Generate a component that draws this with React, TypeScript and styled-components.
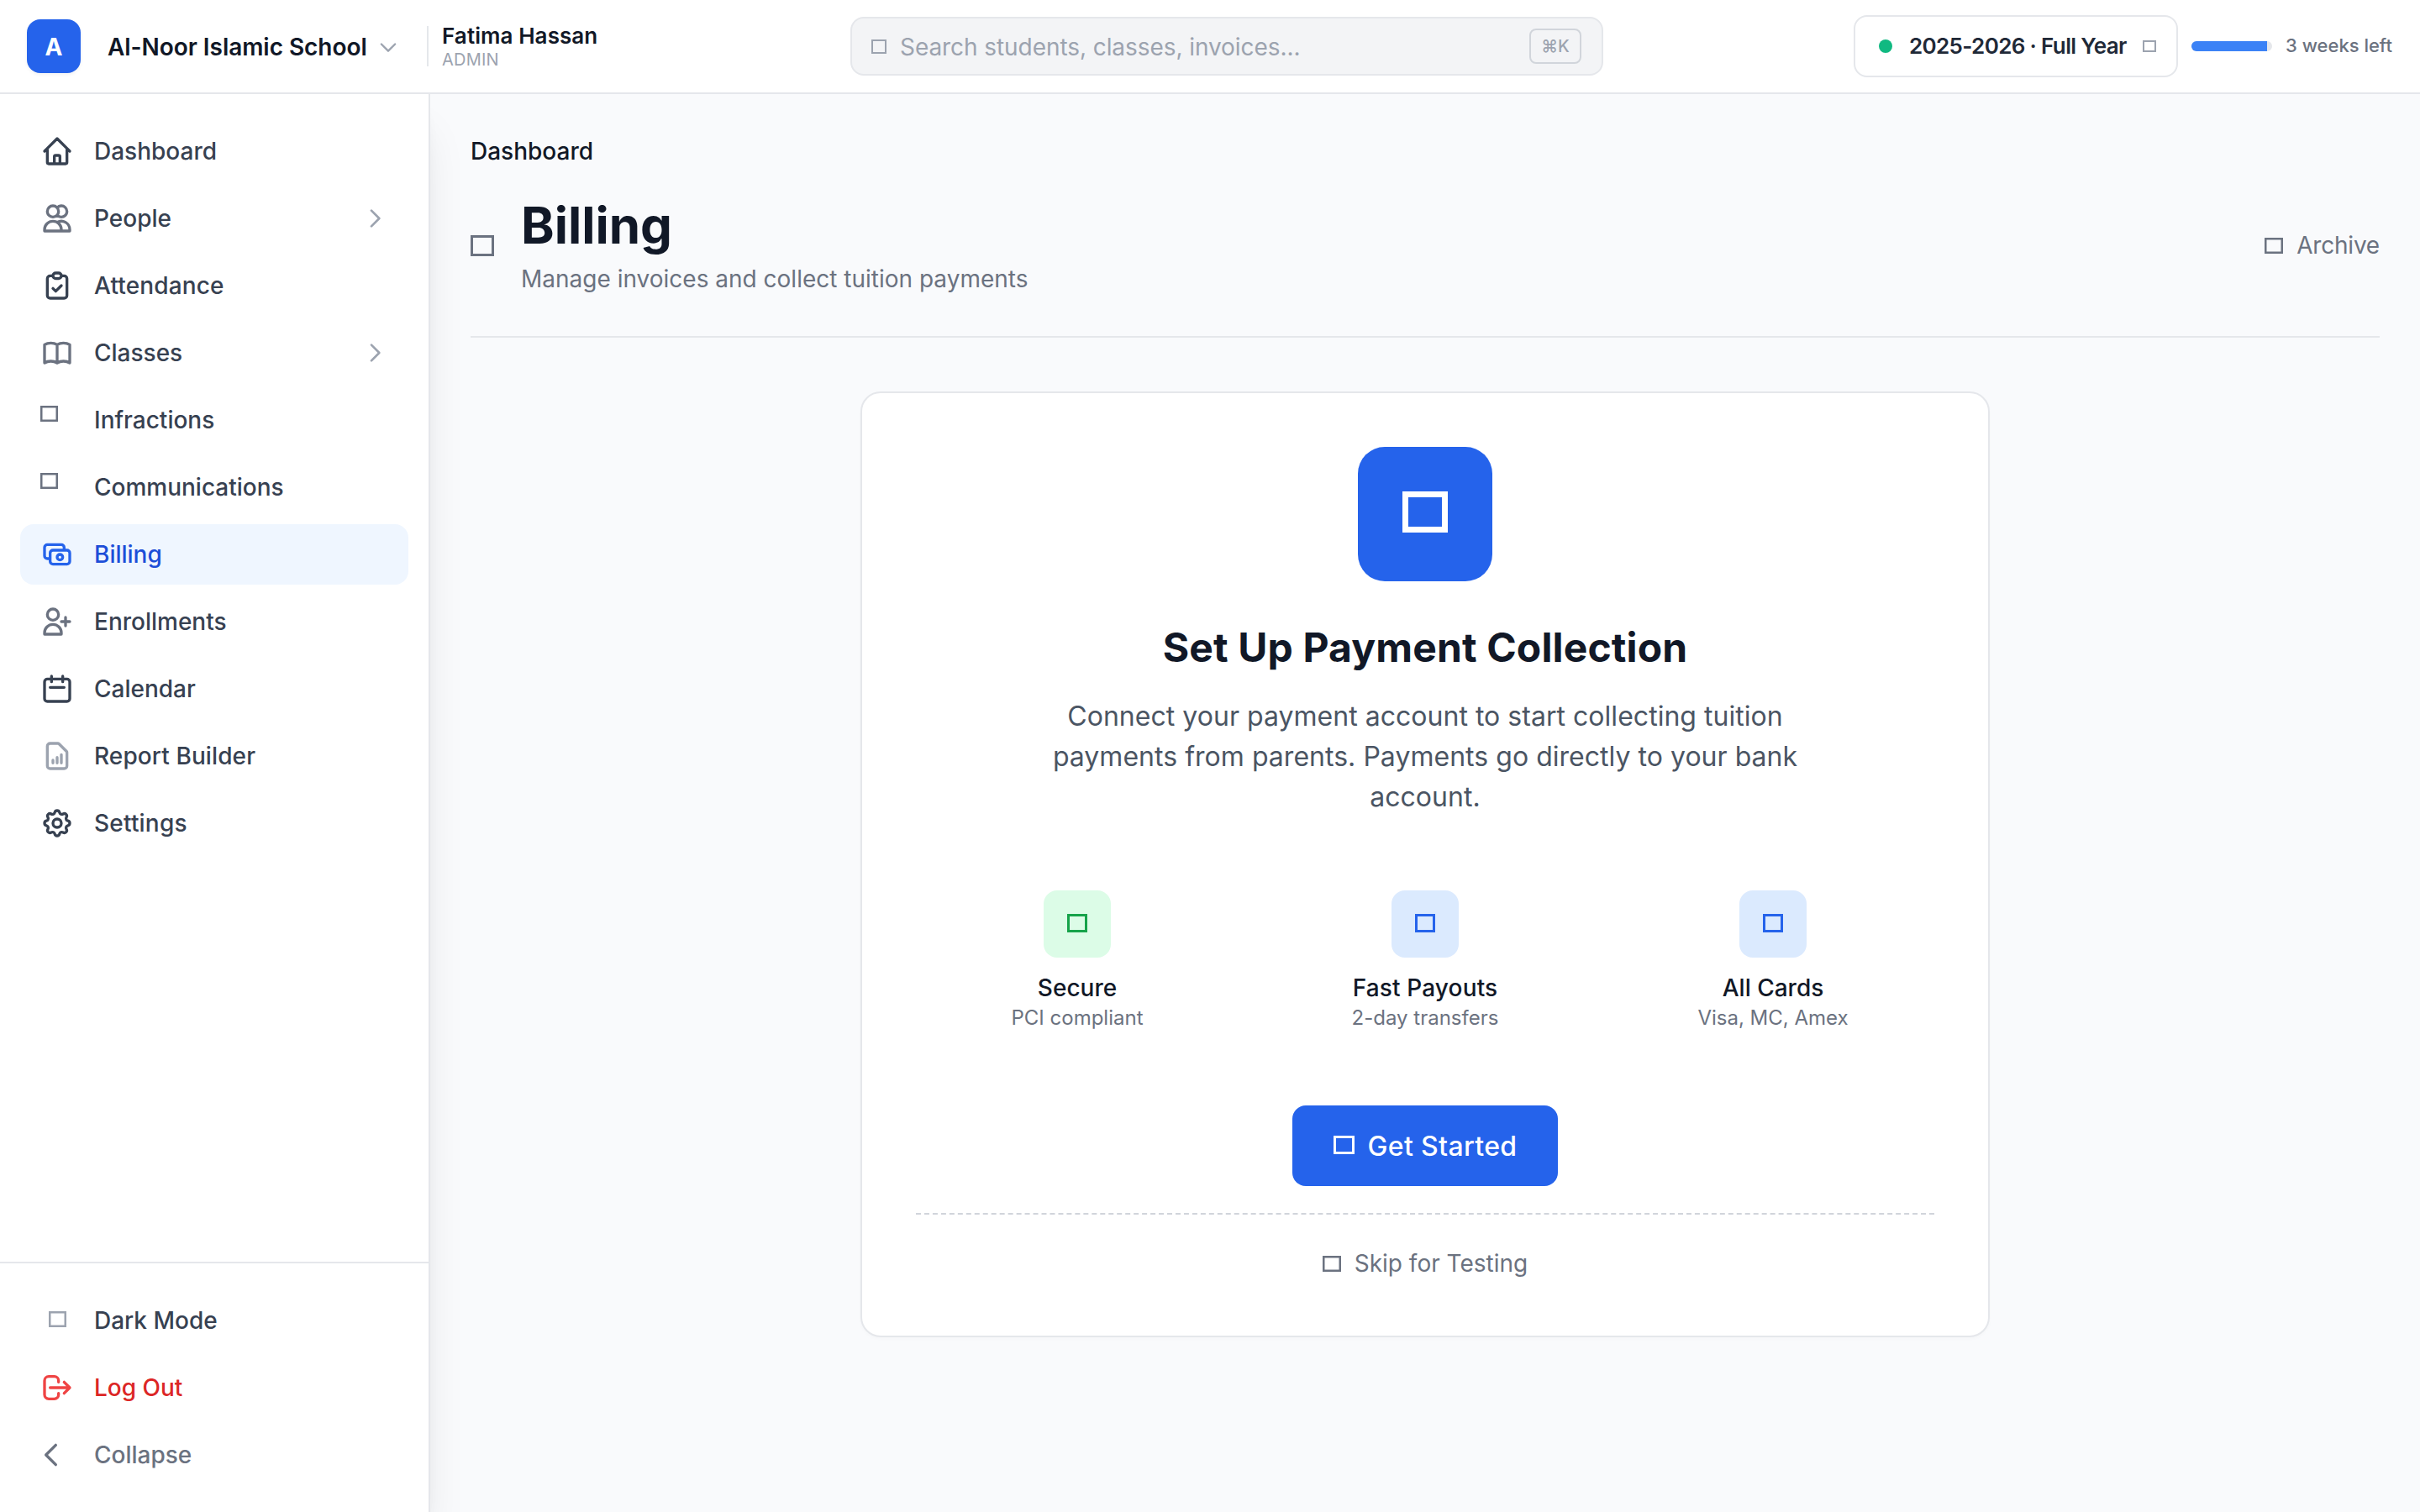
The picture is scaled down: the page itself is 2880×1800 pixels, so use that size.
import React from "react";
import styled, { createGlobalStyle } from "styled-components";

const GlobalStyle = createGlobalStyle`
  *, *::before, *::after { box-sizing: border-box; }
  body {
    margin: 0;
    background: #f9fafc;
    color: #111827;
    font-family: Inter, "Liberation Sans", sans-serif;
    font-size: 28px;
    line-height: 40px;
    font-variation-settings: "opsz" 14;
    -webkit-font-smoothing: antialiased;
  }
  h1, h2, p { margin: 0; }
  button { font: inherit; font-variation-settings: inherit; border: 0; background: none; padding: 0; }
`;

const Page = styled.div`
  display: flex;
  flex-direction: column;
  width: 2880px;
  height: 1800px;
  overflow: hidden;
`;

/* Text run with its own tracking and optional baseline nudge */
const Run = styled.span<{ $track?: number; $drop?: number }>`
  letter-spacing: ${(p) => p.$track ?? 0}px;
  padding-top: ${(p) => p.$drop ?? 0}px;
  white-space: nowrap;
`;

/* ---------- Header ---------- */

const Header = styled.header`
  flex: none;
  display: grid;
  grid-template-columns: 980px 896px 1fr;
  align-items: center;
  height: 112px;
  padding: 0 32px;
  background: #fff;
  border-bottom: 2px solid #e5e7eb;
  position: relative;
  z-index: 2;
`;

const Brand = styled.div`
  display: flex;
  align-items: center;
`;

const Logo = styled.div`
  display: flex;
  align-items: center;
  justify-content: center;
  width: 64px;
  height: 64px;
  margin-right: 32px;
  padding-top: 1px;
  border-radius: 16px;
  background: #2563eb;
  color: #fff;
  font-weight: 700;
  box-shadow: 0 2px 4px rgba(0, 0, 0, 0.05);
`;

const SchoolName = styled.span`
  width: 308px;
  margin-right: 12px;
  padding-top: 2px;
  font-weight: 600;
  letter-spacing: -0.05px;
  white-space: nowrap;
`;

const ChevronSlot = styled.span`
  display: flex;
  padding-top: 2px;
`;

const User = styled.div`
  display: flex;
  flex-direction: column;
  margin-left: 16px;
`;

const UserName = styled.span`
  font-size: 26px;
  line-height: 32px;
  font-weight: 600;
  letter-spacing: 0.08px;
`;

const UserRole = styled.span`
  font-size: 20px;
  line-height: 24px;
  letter-spacing: 0.2px;
  color: #9ca3af;
`;

const Divider = styled.span`
  width: 2px;
  height: 48px;
  margin-left: 32px;
  background: #e5e7eb;
`;

const Search = styled.div`
  display: flex;
  align-items: center;
  height: 70px;
  padding: 0 24px 0 23px;
  border: 2px solid #e5e7eb;
  border-radius: 16px;
  background: #f3f4f6;
  color: #9ca3af;
`;

const SearchText = styled.span`
  flex: 1;
  margin-left: 16px;
  padding-top: 2px;
  letter-spacing: -0.07px;
`;

const Kbd = styled.span`
  display: flex;
  align-items: center;
  justify-content: center;
  width: 62px;
  height: 42px;
  border: 2px solid #d1d5db;
  border-radius: 8px;
  font-size: 20px;
  font-weight: 500;
`;

const HeaderRight = styled.div`
  display: flex;
  align-items: center;
  justify-content: flex-end;
`;

const Term = styled.div`
  display: flex;
  align-items: center;
  width: 386px;
  height: 74px;
  padding: 0 24px 0 28px;
  border: 2px solid #e5e7eb;
  border-radius: 16px;
  color: #9ca3af;
`;

const Dot = styled.span`
  width: 16px;
  height: 16px;
  margin-right: 20px;
  border-radius: 50%;
  background: #10b981;
`;

const TermName = styled.span`
  flex: 1;
  font-size: 26px;
  font-weight: 600;
  letter-spacing: -0.025em;
  color: #1f2937;
  white-space: nowrap;
`;

const Track = styled.div`
  width: 96px;
  height: 12px;
  margin: 0 16px;
  border-radius: 6px;
  overflow: hidden;
  background: #e5e7eb;
`;

const Fill = styled.div`
  height: 100%;
  background: #3b82f6;
`;

const WeeksLeft = styled.span`
  width: 128px;
  font-size: 22px;
  line-height: 38px;
  padding-bottom: 2px;
  font-weight: 500;
  color: #6b7280;
  white-space: nowrap;
`;

/* ---------- Sidebar ---------- */

const Body = styled.div`
  flex: 1;
  display: flex;
  min-height: 0;
`;

const Sidebar = styled.aside`
  flex: none;
  display: flex;
  flex-direction: column;
  justify-content: space-between;
  width: 512px;
  background: #fff;
  border-right: 2px solid #e5e7eb;
  box-shadow: 0 40px 50px -10px rgba(0, 0, 0, 0.1), 0 16px 20px -12px rgba(0, 0, 0, 0.1);
`;

const NavGroup = styled.nav<{ $footer?: boolean }>`
  display: flex;
  flex-direction: column;
  gap: 8px;
  padding: 32px 24px;
  border-top: ${(p) => (p.$footer ? "2px solid #e5e7eb" : "0")};
`;

const NavItem = styled.button<{ $active?: boolean; $color?: string }>`
  display: flex;
  align-items: center;
  height: 72px;
  padding: 0 24px;
  border-radius: 16px;
  background: ${(p) => (p.$active ? "#eff6ff" : "transparent")};
  color: ${(p) => p.$color ?? "#374151"};
  font-weight: 500;
  text-align: left;
`;

const NavLabel = styled.span<{ $track?: number }>`
  flex: 1;
  letter-spacing: ${(p) => p.$track ?? 0}px;
`;

const IconSlot = styled.span<{ $color: string; $align?: string }>`
  display: flex;
  align-items: ${(p) => p.$align ?? "center"};
  justify-content: ${(p) => p.$align ?? "center"};
  width: 40px;
  height: 40px;
  padding: ${(p) => (p.$align ? "3px 0 0" : "0")};
  margin-right: 24px;
  color: ${(p) => p.$color};
`;

const GlyphNudge = styled.span<{ $up: number }>`
  display: flex;
  padding-bottom: ${(p) => p.$up}px;
`;

/* ---------- Main ---------- */

const Main = styled.main`
  flex: 1;
  display: flex;
  flex-direction: column;
  padding: 48px;
`;

const Breadcrumb = styled.div`
  font-weight: 500;
`;

const PageHead = styled.div`
  display: flex;
  align-items: center;
  margin-top: 32px;
  padding-bottom: 48px;
  border-bottom: 2px solid #e5e7eb;
  color: #6b7280;
`;

const HeadText = styled.div`
  flex: 1;
  margin-left: 32px;
`;

const Title = styled.h1`
  margin-bottom: 8px;
  font-size: 60px;
  line-height: 72px;
  font-weight: 700;
  color: #111827;
`;

const Archive = styled.button`
  display: flex;
  align-items: center;
  gap: 16px;
  color: #6b7280;
`;

const Card = styled.section`
  display: flex;
  flex-direction: column;
  align-items: center;
  align-self: center;
  width: 1344px;
  height: 1126px;
  margin-top: 64px;
  padding: 64px;
  border: 2px solid #e5e7eb;
  border-radius: 24px;
  background: #fff;
  box-shadow: 0 2px 4px rgba(0, 0, 0, 0.02);
`;

const Tile = styled.div`
  flex: none;
  display: flex;
  align-items: center;
  justify-content: center;
  width: 160px;
  height: 160px;
  padding-bottom: 5px;
  border-radius: 32px;
  background: #2563eb;
  color: #fff;
`;

const CardTitle = styled.h2`
  margin: 49px 0 28px;
  font-size: 48px;
  line-height: 60px;
  font-weight: 700;
  letter-spacing: 0.14px;
`;

const Lead = styled.p`
  width: 896px;
  font-size: 32px;
  line-height: 48px;
  text-align: center;
  letter-spacing: 0.03px;
  color: #4b5563;
`;

const Features = styled.div`
  align-self: stretch;
  display: grid;
  grid-template-columns: repeat(3, 1fr);
  gap: 30px;
  margin: 87px 0 88px;
`;

const Feature = styled.div`
  display: flex;
  flex-direction: column;
  align-items: center;
`;

const FeatureIcon = styled.div<{ $bg: string; $fg: string }>`
  display: flex;
  align-items: center;
  justify-content: center;
  width: 80px;
  height: 80px;
  padding-bottom: 2px;
  margin-bottom: 16px;
  border-radius: 16px;
  background: ${(p) => p.$bg};
  color: ${(p) => p.$fg};
`;

const FeatureName = styled.span<{ $track?: number }>`
  font-weight: 500;
  letter-spacing: ${(p) => p.$track ?? 0}px;
`;

const FeatureNote = styled.span`
  font-size: 24px;
  line-height: 32px;
  color: #6b7280;
`;

const Primary = styled.button`
  flex: none;
  display: flex;
  align-items: center;
  justify-content: center;
  gap: 16px;
  width: 316px;
  height: 96px;
  border-radius: 16px;
  background: #2563eb;
  color: #fff;
  font-size: 32px;
  font-weight: 500;
`;

const SkipRow = styled.div`
  align-self: stretch;
  display: flex;
  justify-content: center;
  margin-top: 32px;
  padding-top: 36px;
  border-top: 2px dashed #d1d5db;
`;

const Skip = styled.button`
  display: flex;
  align-items: center;
  gap: 16px;
  line-height: 44px;
  color: #6b7280;
`;

/* ---------- Icons ---------- */

/* Hollow square used wherever the icon font has no glyph */
const SquareSvg = styled.svg`
  display: block;
  flex: none;
`;

const Square = ({ w, h, b = 2.5 }: { w: number; h: number; b?: number }) => (
  <SquareSvg width={w} height={h} fill="none" stroke="currentColor" strokeWidth={b}>
    <rect x={b / 2} y={b / 2} width={w - b} height={h - b} />
  </SquareSvg>
);

const paths = {
  home: "M3 12l2-2m0 0l7-7 7 7M5 10v10a1 1 0 001 1h3m10-11l2 2m-2-2v10a1 1 0 01-1 1h-3m-6 0a1 1 0 001-1v-4a1 1 0 011-1h2a1 1 0 011 1v4a1 1 0 001 1m-6 0h6",
  people:
    "M12 4.354a4 4 0 110 5.292M15 21H3v-1a6 6 0 0112 0v1zm0 0h6v-1a6 6 0 00-9-5.197M13 7a4 4 0 11-8 0 4 4 0 018 0z",
  clipboard:
    "M9 5H7a2 2 0 00-2 2v12a2 2 0 002 2h10a2 2 0 002-2V7a2 2 0 00-2-2h-2M9 5a2 2 0 002 2h2a2 2 0 002-2M9 5a2 2 0 012-2h2a2 2 0 012 2m-6 9l2 2 4-4",
  book: "M12 6.253v13m0-13C10.832 5.477 9.246 5 7.5 5S4.168 5.477 3 6.253v13C4.168 18.477 5.754 18 7.5 18s3.332.477 4.5 1.253m0-13C13.168 5.477 14.754 5 16.5 5c1.747 0 3.332.477 4.5 1.253v13C19.832 18.477 18.247 18 16.5 18c-1.746 0-3.332.477-4.5 1.253",
  cash: "M17 9V7a2 2 0 00-2-2H5a2 2 0 00-2 2v6a2 2 0 002 2h2m2 4h10a2 2 0 002-2v-6a2 2 0 00-2-2H9a2 2 0 00-2 2v6a2 2 0 002 2zm7-5a2 2 0 11-4 0 2 2 0 014 0z",
  userAdd:
    "M18 9v3m0 0v3m0-3h3m-3 0h-3m-2-5a4 4 0 11-8 0 4 4 0 018 0zM3 20a6 6 0 0112 0v1H3v-1z",
  calendar:
    "M8 7V3m8 4V3m-9 8h10M5 21h14a2 2 0 002-2V7a2 2 0 00-2-2H5a2 2 0 00-2 2v12a2 2 0 002 2z",
  report:
    "M9 17v-2m3 2v-4m3 4v-6m2 10H7a2 2 0 01-2-2V5a2 2 0 012-2h5.586a1 1 0 01.707.293l5.414 5.414a1 1 0 01.293.707V19a2 2 0 01-2 2z",
  settings:
    "M10.325 4.317c.426-1.756 2.924-1.756 3.35 0a1.724 1.724 0 002.573 1.066c1.543-.94 3.31.826 2.37 2.37a1.724 1.724 0 001.065 2.572c1.756.426 1.756 2.924 0 3.35a1.724 1.724 0 00-1.066 2.573c.94 1.543-.826 3.31-2.37 2.37a1.724 1.724 0 00-2.572 1.065c-.426 1.756-2.924 1.756-3.35 0a1.724 1.724 0 00-2.573-1.066c-1.543.94-3.31-.826-2.37-2.37a1.724 1.724 0 00-1.065-2.572c-1.756-.426-1.756-2.924 0-3.35a1.724 1.724 0 001.066-2.573c-.94-1.543.826-3.31 2.37-2.37.996.608 2.296.07 2.572-1.065zM15 12a3 3 0 11-6 0 3 3 0 016 0z",
  logout:
    "M17 16l4-4m0 0l-4-4m4 4H7m6 4v1a3 3 0 01-3 3H6a3 3 0 01-3-3V7a3 3 0 013-3h4a3 3 0 013 3v1",
  collapse: "M11 19l-7-7 7-7",
  right: "M9 5l7 7-7 7",
  down: "M19 9l-7 7-7-7",
};

type IconName = keyof typeof paths;

const Icon = ({ name, size = 40, color = "currentColor" }: { name: IconName; size?: number; color?: string }) => (
  <svg
    width={size}
    height={size}
    viewBox="0 0 24 24"
    fill="none"
    stroke={color}
    strokeWidth={2}
    strokeLinecap="round"
    strokeLinejoin="round"
  >
    <path d={paths[name]} />
  </svg>
);

interface Entry {
  label: string;
  icon?: IconName;
  iconColor: string;
  expandable?: boolean;
  active?: boolean;
  track?: number;
}

const nav: Entry[] = [
  { label: "Dashboard", icon: "home", iconColor: "#374151" },
  { label: "People", icon: "people", iconColor: "#6b7280", expandable: true },
  { label: "Attendance", icon: "clipboard", iconColor: "#374151", track: 0.15 },
  { label: "Classes", icon: "book", iconColor: "#6b7280", expandable: true },
  { label: "Infractions", iconColor: "#6b7280" },
  { label: "Communications", iconColor: "#6b7280" },
  { label: "Billing", icon: "cash", iconColor: "#2563eb", active: true },
  { label: "Enrollments", icon: "userAdd", iconColor: "#6b7280" },
  { label: "Calendar", icon: "calendar", iconColor: "#374151" },
  { label: "Report Builder", icon: "report", iconColor: "#9ca3af", track: 0.1 },
  { label: "Settings", icon: "settings", iconColor: "#374151", track: 0.2 },
];

const features = [
  { name: "Secure", note: "PCI compliant", bg: "#dcfce7", fg: "#16a34a" },
  { name: "Fast Payouts", note: "2-day transfers", bg: "#dbeafe", fg: "#2563eb", track: 0.15 },
  { name: "All Cards", note: "Visa, MC, Amex", bg: "#dbeafe", fg: "#2563eb" },
];

export default function App() {
  return (
    <Page>
      <GlobalStyle />
      <Header>
        <Brand>
          <Logo>A</Logo>
          <SchoolName>Al-Noor Islamic School</SchoolName>
          <ChevronSlot>
            <Icon name="down" size={28} color="#9ca3af" />
          </ChevronSlot>
          <Divider />
          <User>
            <UserName>Fatima Hassan</UserName>
            <UserRole>ADMIN</UserRole>
          </User>
        </Brand>
        <Search>
          <Square w={18} h={17} b={2} />
          <SearchText>Search students, classes, invoices...</SearchText>
          <Kbd>⌘K</Kbd>
        </Search>
        <HeaderRight>
          <Term>
            <Dot />
            <TermName>2025-2026 · Full Year</TermName>
            <Square w={16} h={14} b={2} />
          </Term>
          <Track>
            <Fill style={{ width: `${(90 / 96) * 100}%` }} />
          </Track>
          <WeeksLeft>3 weeks left</WeeksLeft>
        </HeaderRight>
      </Header>
      <Body>
        <Sidebar>
          <NavGroup>
            {nav.map((n) => (
              <NavItem key={n.label} $active={n.active} $color={n.active ? "#1d4ed8" : undefined}>
                <IconSlot $color={n.iconColor} $align={n.icon ? undefined : "flex-start"}>
                  {n.icon ? <Icon name={n.icon} /> : <Square w={21} h={19} />}
                </IconSlot>
                <NavLabel $track={n.track}>{n.label}</NavLabel>
                {n.expandable && <Icon name="right" size={32} color="#9ca3af" />}
              </NavItem>
            ))}
          </NavGroup>
          <NavGroup $footer>
            <NavItem>
              <IconSlot $color="#9ca3af">
                <GlyphNudge $up={3}>
                  <Square w={21} h={19} />
                </GlyphNudge>
              </IconSlot>
              <NavLabel>Dark Mode</NavLabel>
            </NavItem>
            <NavItem $color="#dc2626">
              <IconSlot $color="#ef4444">
                <Icon name="logout" />
              </IconSlot>
              <NavLabel>Log Out</NavLabel>
            </NavItem>
            <NavItem $color="#6b7280">
              <IconSlot $color="#6b7280">
                <Icon name="collapse" />
              </IconSlot>
              <NavLabel>Collapse</NavLabel>
            </NavItem>
          </NavGroup>
        </Sidebar>
        <Main>
          <Breadcrumb>Dashboard</Breadcrumb>
          <PageHead>
            <Square w={28} h={25} b={3} />
            <HeadText>
              <Title>Billing</Title>
              <p>Manage invoices and collect tuition payments</p>
            </HeadText>
            <Archive>
              <Square w={22} h={19} />
              <Run $track={-0.2}>Archive</Run>
            </Archive>
          </PageHead>
          <Card>
            <Tile>
              <Square w={54} h={49} b={7} />
            </Tile>
            <CardTitle>Set Up Payment Collection</CardTitle>
            <Lead>
              Connect your payment account to start collecting tuition payments from parents. Payments go directly to
              your bank account.
            </Lead>
            <Features>
              {features.map((f) => (
                <Feature key={f.name}>
                  <FeatureIcon $bg={f.bg} $fg={f.fg}>
                    <Square w={24} h={22} b={3} />
                  </FeatureIcon>
                  <FeatureName $track={f.track}>{f.name}</FeatureName>
                  <FeatureNote>{f.note}</FeatureNote>
                </Feature>
              ))}
            </Features>
            <Primary>
              <GlyphNudge $up={2}>
                <Square w={25} h={22} b={3} />
              </GlyphNudge>
              <Run $track={0.35} $drop={2}>
                Get Started
              </Run>
            </Primary>
            <SkipRow>
              <Skip>
                <Square w={22} h={19} />
                <Run>Skip for Testing</Run>
              </Skip>
            </SkipRow>
          </Card>
        </Main>
      </Body>
    </Page>
  );
}
